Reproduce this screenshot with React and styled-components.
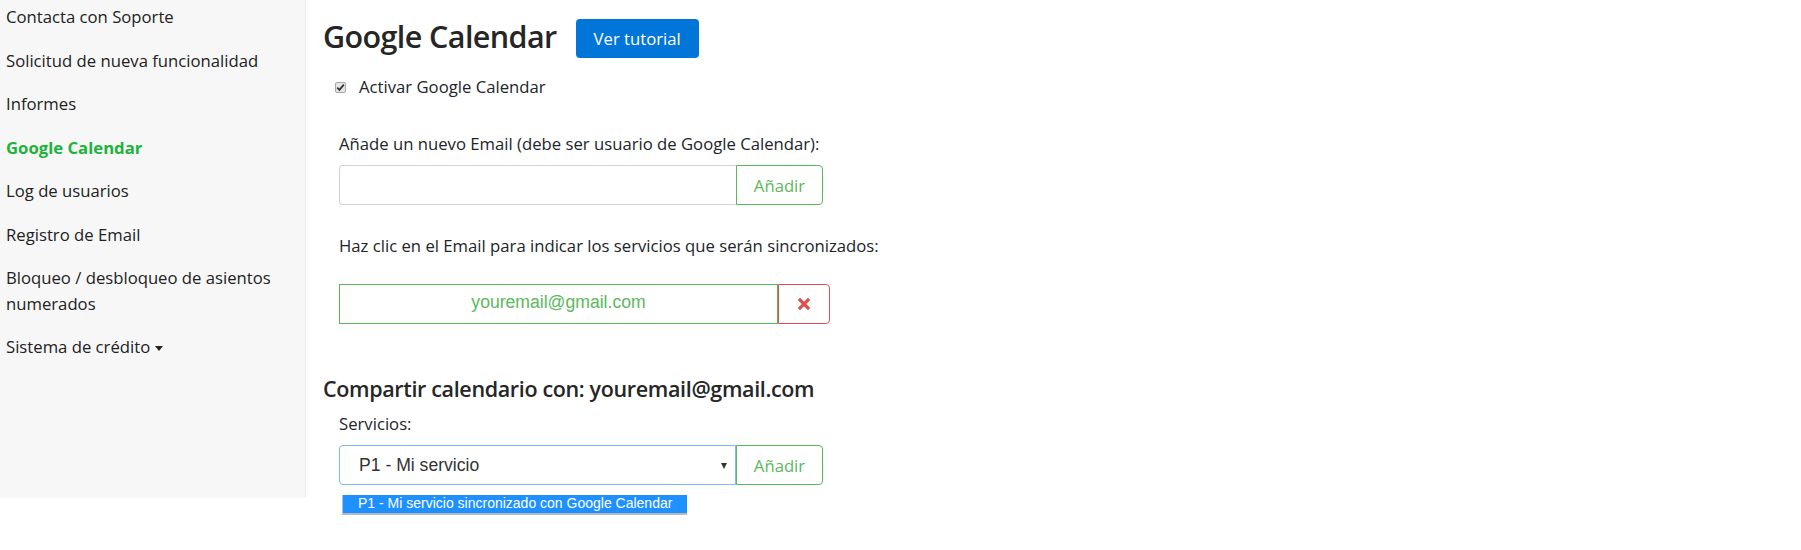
import React from "react";
import styled, { createGlobalStyle } from "styled-components";

const GlobalStyle = createGlobalStyle`
  html, body {
    margin: 0;
    padding: 0;
    background: #ffffff;
  }
  body {
    font-family: "Open Sans", "Noto Sans", sans-serif;
    font-size: 16.7px;
    color: #212529;
  }
  * { box-sizing: border-box; }
`;

const Page = styled.div`
  display: flex;
  align-items: flex-start;
  min-height: 100vh;
`;

const Sidebar = styled.nav`
  flex: 0 0 306px;
  height: 498px;
  background: #f7f7f7;
  border-right: 1px solid #ececec;
`;

const NavList = styled.ul`
  list-style: none;
  margin: 0;
  padding: 0;
`;

const NavItem = styled.li`
  padding: 4px 6px 14px 6px;
  line-height: 25.5px;
  font-size: 16.7px;
  color: ${(p) => (p.$active ? "#1cb33c" : "#222")};
  font-weight: ${(p) => (p.$active ? 700 : 400)};
  width: 290px;
`;

const Caret = styled.span`
  display: inline-block;
  width: 0;
  height: 0;
  margin-left: 5px;
  vertical-align: middle;
  border-top: 5px solid #222;
  border-left: 4px solid transparent;
  border-right: 4px solid transparent;
`;

const Main = styled.main`
  flex: 1;
  padding: 0 0 0 17px;
`;

const TitleRow = styled.div`
  display: flex;
  align-items: center;
  margin-top: 19px;
  height: 39px;
`;

const Title = styled.h2`
  margin: 0 0 4px 0;
  font-size: 30.5px;
  letter-spacing: -0.6px;
  font-weight: 600;
  line-height: 39px;
  color: #262626;
`;

const PrimaryButton = styled.button`
  margin-left: 19px;
  height: 39px;
  padding: 0 18px;
  border: none;
  border-radius: 4px;
  background: #0275d8;
  color: #ffffff;
  font-family: inherit;
  font-size: 16.7px;
  cursor: pointer;
`;

const CheckRow = styled.label`
  display: flex;
  align-items: center;
  gap: 13px;
  margin-top: 17px;
  padding-left: 12px;
  line-height: 24px;
  font-size: 16.7px;
`;

const CheckBox = styled.span`
  display: inline-flex;
  align-items: center;
  justify-content: center;
  width: 11px;
  height: 11px;
  border: 1px solid #a9a9a9;
  border-radius: 2px;
  background: #e6e6e6;
`;

const Panel = styled.div`
  padding-left: 16px;
`;

const FieldLabel = styled.div`
  margin-top: ${(p) => p.$top}px;
  margin-bottom: 9px;
  line-height: 24px;
  font-size: 16.7px;
  white-space: nowrap;
`;

const InputGroup = styled.div`
  position: relative;
  display: flex;
  width: 484px;
  height: 40px;
`;

const TextInput = styled.input`
  flex: 1;
  min-width: 0;
  height: 100%;
  border: 1px solid #d2d2d2;
  border-right: none;
  border-radius: 4px 0 0 4px;
  padding: 0 12px;
  font-size: 16px;
  outline: none;
`;

const OutlineButton = styled.button`
  flex: 0 0 ${(p) => p.$w || 87}px;
  height: 100%;
  border: 1px solid ${(p) => p.$color};
  border-radius: 0 4px 4px 0;
  background: #ffffff;
  color: ${(p) => p.$color};
  font-family: "Open Sans", "Noto Sans", sans-serif;
  font-size: 16.7px;
  display: flex;
  align-items: center;
  justify-content: center;
  padding: 0;
  cursor: pointer;
`;

const EmailRow = styled.div`
  display: flex;
  width: 491px;
  height: 40px;
  margin-top: 26px;
`;

const EmailButton = styled.button`
  flex: 1;
  height: 100%;
  border: 1px solid #5cb85c;
  border-radius: 0;
  background: #ffffff;
  color: #5cb85c;
  font-family: "Liberation Sans", Arial, sans-serif;
  font-size: 17.6px;
  padding: 0 0 3px 0;
  cursor: pointer;
`;

const SubHeading = styled.h4`
  margin: 52px 0 0 0;
  font-size: 21.5px;
  letter-spacing: -0.35px;
  font-weight: 600;
  line-height: 25px;
  color: #262626;
`;

const SelectBox = styled.div`
  flex: 1;
  display: flex;
  align-items: center;
  justify-content: space-between;
  height: 100%;
  border: 1px solid #7fb8f2;
  border-radius: 4px 0 0 4px;
  padding: 0 8px 0 19px;
  font-family: "Liberation Sans", Arial, sans-serif;
  font-size: 17.6px;
  color: #333;
  cursor: default;
`;

const SelectArrow = styled.span`
  width: 0;
  height: 0;
  border-top: 6px solid #333;
  border-left: 3.5px solid transparent;
  border-right: 3.5px solid transparent;
  margin-top: 1px;
`;

/* open native-style dropdown list below the select */
const OptionList = styled.ul`
  position: absolute;
  z-index: 5;
  left: 3px;
  top: 50px;
  width: 345px;
  margin: 0;
  padding: 0;
  list-style: none;
  border-left: 1px solid #9cc8f5;
  border-bottom: 2px solid #b9b9c0;
  background: #ffffff;
`;

const OptionItem = styled.li`
  height: 18px;
  line-height: 16px;
  padding-left: 15px;
  background: ${(p) => (p.$selected ? "#1e90ff" : "#ffffff")};
  color: ${(p) => (p.$selected ? "#ffffff" : "#222")};
  font-family: "Liberation Sans", Arial, sans-serif;
  font-size: 14px;
  white-space: nowrap;
`;

const CheckMark = () => (
  <svg width="9" height="9" viewBox="0 0 9 9" aria-hidden="true">
    <path d="M1.2 4.6 L3.5 6.9 L7.8 1.6" fill="none" stroke="#333" strokeWidth="1.7" />
  </svg>
);

const TimesIcon = () => (
  <svg width="12" height="12" viewBox="0 0 12 12" aria-hidden="true">
    <path d="M2 2 L10 10 M10 2 L2 10" stroke="#d9534f" strokeWidth="3.2" strokeLinecap="square" />
  </svg>
);

const navItems = [
  { label: "Contacta con Soporte" },
  { label: "Solicitud de nueva funcionalidad" },
  { label: "Informes" },
  { label: "Google Calendar", active: true },
  { label: "Log de usuarios" },
  { label: "Registro de Email" },
  { label: "Bloqueo / desbloqueo de asientos numerados" },
  { label: "Sistema de crédito", caret: true },
];

export default function App() {
  return (
    <>
      <GlobalStyle />
      <Page>
        <Sidebar>
          <NavList>
            {navItems.map((item) => (
              <NavItem key={item.label} $active={item.active}>
                {item.label}
                {item.caret && <Caret />}
              </NavItem>
            ))}
          </NavList>
        </Sidebar>
        <Main>
          <TitleRow>
            <Title>Google Calendar</Title>
            <PrimaryButton>Ver tutorial</PrimaryButton>
          </TitleRow>
          <CheckRow>
            <CheckBox>
              <CheckMark />
            </CheckBox>
            Activar Google Calendar
          </CheckRow>
          <Panel>
            <FieldLabel $top={33}>
              Añade un nuevo Email (debe ser usuario de Google Calendar):
            </FieldLabel>
            <InputGroup>
              <TextInput type="text" />
              <OutlineButton $color="#5cb85c">Añadir</OutlineButton>
            </InputGroup>
            <FieldLabel $top={29}>
              Haz clic en el Email para indicar los servicios que serán sincronizados:
            </FieldLabel>
            <EmailRow>
              <EmailButton>youremail@gmail.com</EmailButton>
              <OutlineButton $color="#d9534f" $w={52}>
                <TimesIcon />
              </OutlineButton>
            </EmailRow>
          </Panel>
          <SubHeading>Compartir calendario con: youremail@gmail.com</SubHeading>
          <Panel>
            <FieldLabel $top={11}>Servicios:</FieldLabel>
            <InputGroup>
              <SelectBox>
                P1 - Mi servicio
                <SelectArrow />
              </SelectBox>
              <OutlineButton $color="#5cb85c">Añadir</OutlineButton>
              <OptionList>
                <OptionItem $selected>
                  P1 - Mi servicio sincronizado con Google Calendar
                </OptionItem>
              </OptionList>
            </InputGroup>
          </Panel>
        </Main>
      </Page>
    </>
  );
}
